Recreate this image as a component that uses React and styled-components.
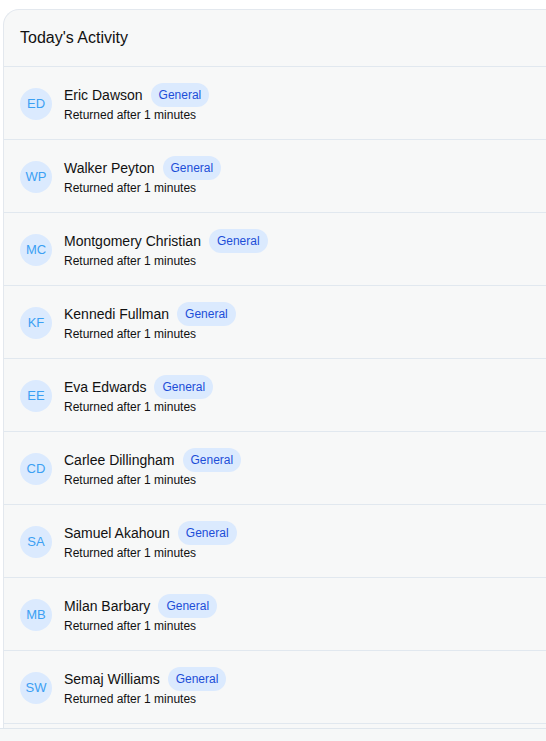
import React from "react";
import styled, { createGlobalStyle } from "styled-components";

const Global = createGlobalStyle`
  html, body { margin: 0; padding: 0; background: #ffffff; overflow: hidden; }
  body { font-family: "Liberation Sans", Arial, sans-serif; color: #111827; }
`;

const Page = styled.div`
  padding: 9px 0 0 3px;
  height: 741px;
  box-sizing: border-box;
  overflow: hidden;
  position: relative;
`;

const Card = styled.section`
  width: 620px;
  min-height: 760px;
  background: #f7f8f8;
  border: 1px solid #e3e8ee;
  border-right: none;
  border-radius: 16px 0 0 0;
`;

const Header = styled.header`
  height: 56px;
  display: flex;
  align-items: center;
  padding: 0 16px;
  border-bottom: 1px solid #e1e8ef;
  font-size: 16px;
  color: #111;
`;

const Row = styled.div`
  display: flex;
  align-items: center;
  gap: 12px;
  height: 72px;
  padding: 0 16px;
  border-bottom: 1px solid #e1e8ef;
`;

const Avatar = styled.div`
  width: 32px;
  height: 32px;
  border-radius: 50%;
  background: #dbeafe;
  color: #3ca0f3;
  font-size: 13px;
  display: flex;
  align-items: center;
  justify-content: center;
  flex-shrink: 0;
  margin-top: 1px;
`;

const Info = styled.div`
  display: flex;
  flex-direction: column;
`;

const NameLine = styled.div`
  display: flex;
  align-items: center;
  gap: 8px;
  height: 24px;
`;

const Name = styled.span`
  font-size: 14px;
  color: #111;
`;

const Badge = styled.span`
  display: inline-flex;
  align-items: center;
  height: 24px;
  padding: 0 8px;
  border-radius: 12px;
  background: #dbeafe;
  color: #1d4ed8;
  font-size: 12px;
`;

const Sub = styled.div`
  font-size: 12px;
  line-height: 16px;
  color: #111;
`;

const Footer = styled.div`
  position: absolute;
  left: 0;
  right: 0;
  top: 728px;
  bottom: 0;
  background: #f6f8f8;
  border-top: 1px solid #dfe6ed;
`;

const people = [
  ["ED", "Eric Dawson"],
  ["WP", "Walker Peyton"],
  ["MC", "Montgomery Christian"],
  ["KF", "Kennedi Fullman"],
  ["EE", "Eva Edwards"],
  ["CD", "Carlee Dillingham"],
  ["SA", "Samuel Akahoun"],
  ["MB", "Milan Barbary"],
  ["SW", "Semaj Williams"],
];

export default function App() {
  return (
    <>
      <Global />
      <Page>
        <Card>
          <Header>Today's Activity</Header>
          {people.map(([ini, name]) => (
            <Row key={name}>
              <Avatar>{ini}</Avatar>
              <Info>
                <NameLine>
                  <Name>{name}</Name>
                  <Badge>General</Badge>
                </NameLine>
                <Sub>Returned after 1 minutes</Sub>
              </Info>
            </Row>
          ))}
        </Card>
        <Footer />
      </Page>
    </>
  );
}
